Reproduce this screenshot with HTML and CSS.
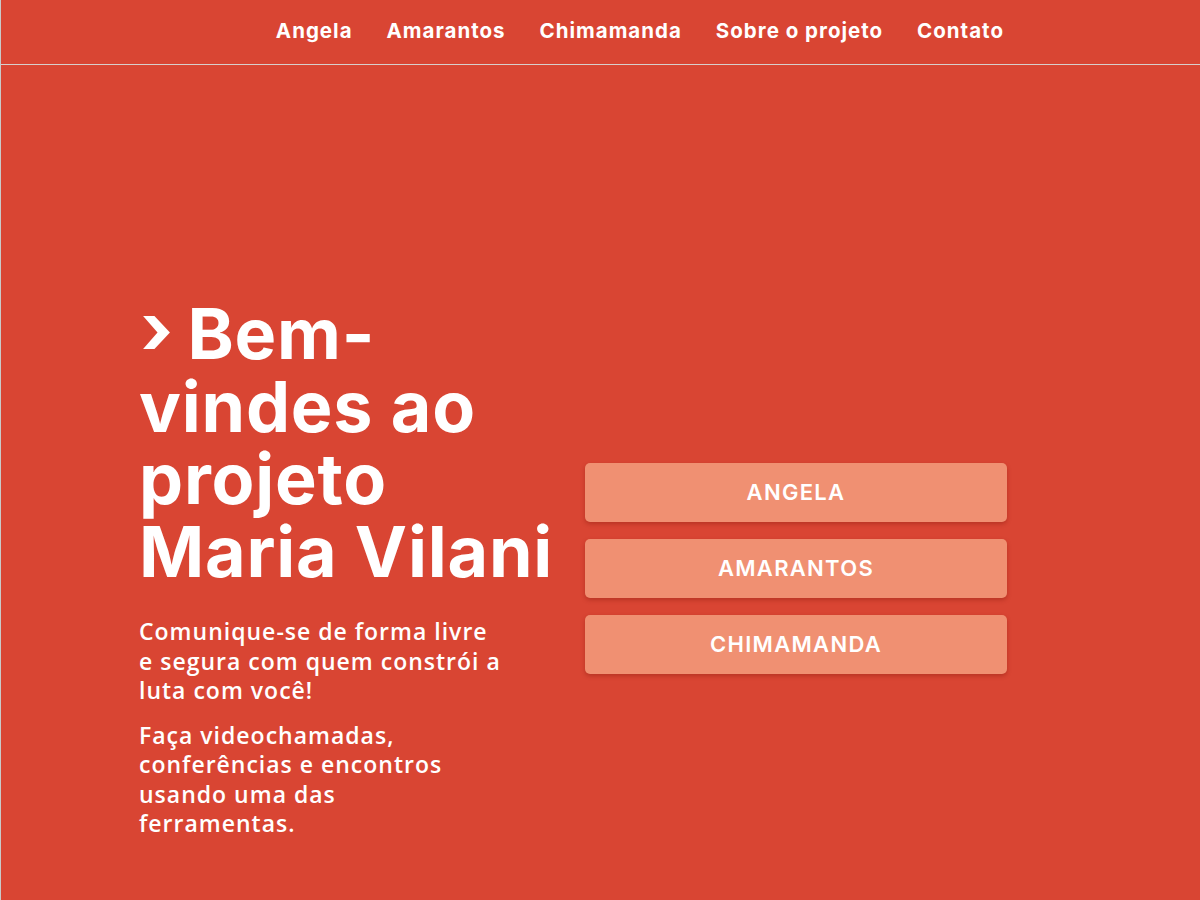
FILE: index.html
```html
<!DOCTYPE html>
<html lang="pt-BR">
<head>
<meta charset="utf-8">
<title>Projeto Maria Vilani</title>
<link rel="stylesheet" href="styles.css">
</head>
<body>
<div class="page">
  <header class="topbar">
    <nav class="nav">
      <a href="#">Angela</a>
      <a href="#">Amarantos</a>
      <a href="#">Chimamanda</a>
      <a href="#">Sobre o projeto</a>
      <a href="#">Contato</a>
    </nav>
  </header>
  <main class="hero">
    <section class="intro">
      <h1 class="title"><svg class="chev" viewBox="0 0 26 32" width="27" height="33" aria-hidden="true"><polygon points="0,0 11,0 26,16 11,32 0,32 14,16" fill="#fff"/></svg> Bem-<br>vindes ao<br>projeto<br>Maria Vilani</h1>
      <p class="lead">Comunique-se de forma livre<br>e segura com quem constrói a<br>luta com você!</p>
      <p class="lead">Faça videochamadas,<br>conferências e encontros<br>usando uma das<br>ferramentas.</p>
    </section>
    <section class="tools">
      <a class="tool" href="#">ANGELA</a>
      <a class="tool" href="#">AMARANTOS</a>
      <a class="tool" href="#">CHIMAMANDA</a>
    </section>
  </main>
</div>
</body>
</html>
```
FILE: styles.css
```css
html, body {
  margin: 0;
  padding: 0;
  background: #d94533;
}
.page {
  min-height: 900px;
  background: #d94533;
  border-left: 1px solid #c9c9c9;
  color: #fff;
}
.topbar {
  height: 65px;
  box-sizing: border-box;
  padding: 0 196px 4px 0;
  border-bottom: 1px solid #d8cfcc;
  display: flex;
  justify-content: flex-end;
  align-items: center;
}
.nav {
  display: flex;
  gap: 34px;
}
.nav a {
  color: #fff;
  text-decoration: none;
  font-family: "Inter", "Liberation Sans", sans-serif;
  font-weight: 700;
  font-size: 20.5px;
  letter-spacing: 1px;
}
.hero {
  display: flex;
  align-items: center;
  padding: 233px 0 0 138px;
  gap: 34px;
}
.intro {
  width: 412px;
  flex: none;
  white-space: nowrap;
}
.title {
  margin: 0 0 29px;
  font-family: "Inter", "Liberation Sans", sans-serif;
  font-weight: 700;
  font-size: 70px;
  line-height: 72.5px;
  letter-spacing: 0.8px;
}
.chev {
  vertical-align: 10px;
  margin-left: 4px;
}
.lead {
  margin: 0 0 15px;
  font-family: "Open Sans", "Liberation Sans", sans-serif;
  font-weight: 600;
  font-size: 23px;
  line-height: 29.5px;
  letter-spacing: 1px;
}
.lead:last-child {
  margin-bottom: 0;
}
.tools {
  width: 422px;
  display: flex;
  flex-direction: column;
  gap: 17px;
}
.tool {
  display: flex;
  align-items: center;
  justify-content: center;
  height: 59px;
  background: #f09072;
  border-radius: 5px;
  box-shadow: 0 2px 4px rgba(120, 20, 10, 0.35);
  color: #fff;
  text-decoration: none;
  font-family: "Inter", "Liberation Sans", sans-serif;
  font-weight: 600;
  font-size: 22px;
  letter-spacing: 1.3px;
}
```
